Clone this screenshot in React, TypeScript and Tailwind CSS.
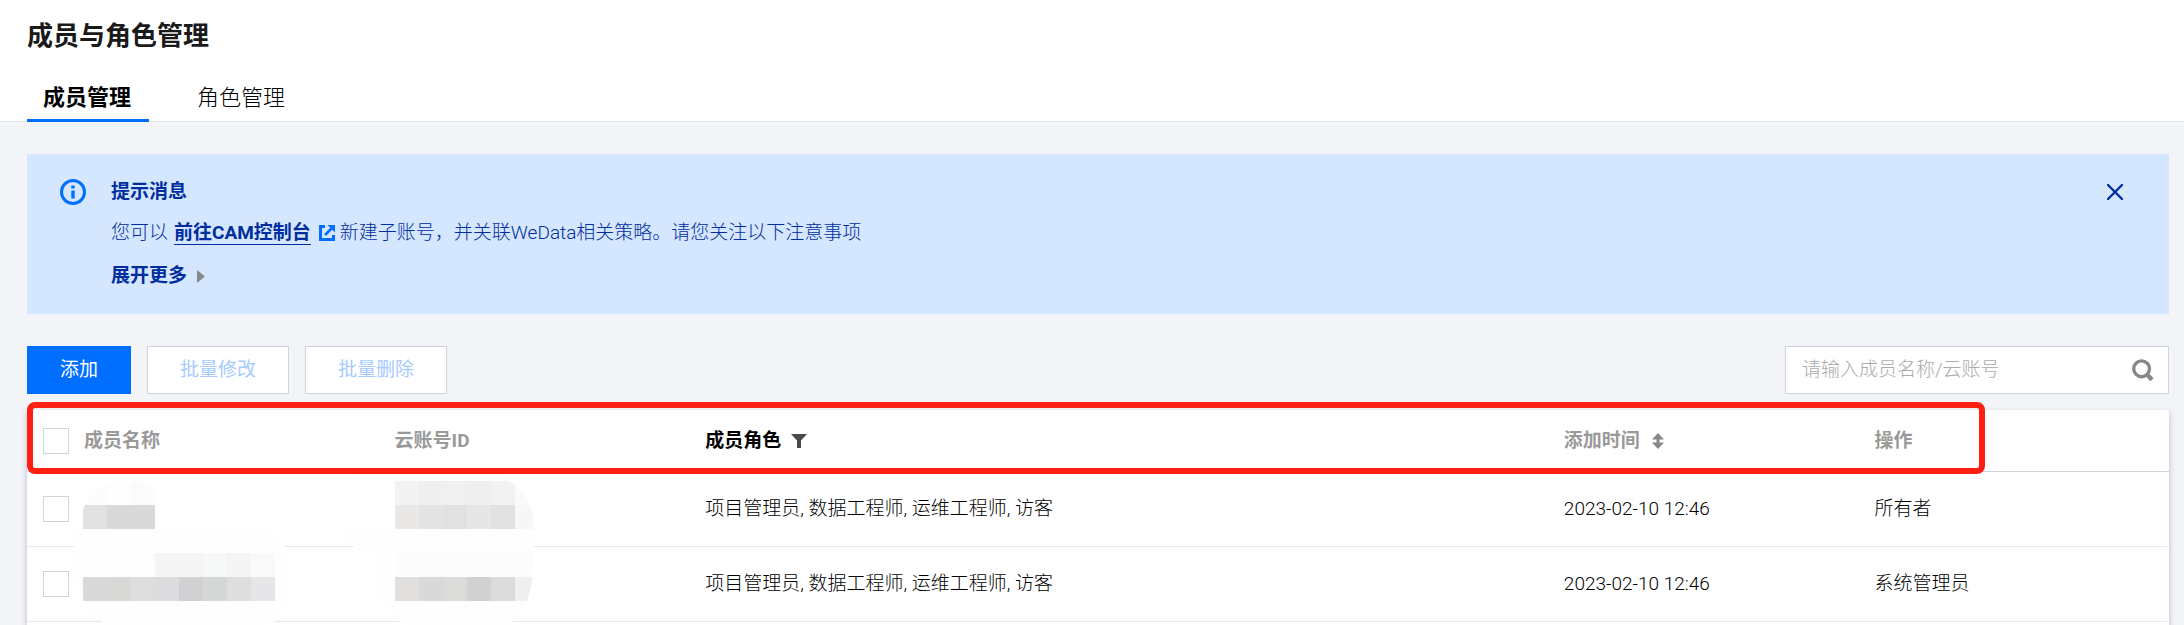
import { useState } from "react";

type Member = {
  id: string;
  roles: string;
  createdAt: string;
  operation: string;
};

const MEMBERS: Member[] = [
  {
    id: "m1",
    roles: "项目管理员, 数据工程师, 运维工程师, 访客",
    createdAt: "2023-02-10 12:46",
    operation: "所有者",
  },
  {
    id: "m2",
    roles: "项目管理员, 数据工程师, 运维工程师, 访客",
    createdAt: "2023-02-10 12:46",
    operation: "系统管理员",
  },
];

type MaskLine = { y: number; colors: (string | null)[] };

// One entry per mosaic line, 24px per block; null leaves the block out.
const NAME_MASK: MaskLine[] = [
  { y: 10, colors: ["#fcfcfc", null, "#fbfbfb"] },
  { y: 34, colors: ["#e3e1e0", "#d9d9d9", "#d9d9d9"] },
  { y: 82, colors: [null, null, "#fdfdfb", "#f5f5f5", "#f5f5f5", "#f7f9f8", "#f4f4f4", "#f9f9f9"] },
  { y: 106, colors: ["#d9d9d9", "#d8d8d6", "#dddddd", "#dcdbde", "#d3d0d3", "#d4d7d5", "#dfdedc", "#e6e6e8"] },
];

const ACCOUNT_MASK: MaskLine[] = [
  { y: 10, colors: ["#f3f3f3", "#efefef", "#f0f0f0", "#efefef", "#f2f2f2", "#fafafa"] },
  { y: 34, colors: ["#e9e8e6", "#e1e3e5", "#e1e1e1", "#e6e6e6", "#e1e1e1", "#f7f7f7"] },
  { y: 82, colors: ["#fcfcfc", "#fbfbfb", "#fcfcfc", "#fcfcfc", "#fcfcfc", "#fcfcfc"] },
  { y: 106, colors: ["#e1e0de", "#d7d9db", "#dbdbd9", "#d1d1d1", "#dbdbdb", "#efefef"] },
];

function Mosaic({ lines, x }: { lines: MaskLine[]; x: number }) {
  return (
    <>
      {lines.map((line) =>
        line.colors.map((color, i) =>
          color ? (
            <rect key={`${line.y}-${i}`} x={x + i * 24} y={line.y} width="24" height="24" fill={color} />
          ) : null,
        ),
      )}
    </>
  );
}

/** Redacted member names and account ids, laid over the first two rows. */
function MemberMask() {
  return (
    <svg
      className="pointer-events-none absolute top-[61px] left-0"
      width="520"
      height="154"
      viewBox="0 0 520 154"
      shapeRendering="crispEdges"
      aria-hidden
    >
      <clipPath id="name-mask">
        <path d="M47 85C47 45 62 10 100 10C115 10 127 17 132 26V57H235C250 62 260 72 261 90V130C255 145 250 154 235 154H80C58 140 47 120 47 85Z" />
      </clipPath>
      <clipPath id="account-mask">
        <path d="M325 8C345 4 460 2 482 10C500 20 507 40 507 60V85C506 125 498 142 480 154H380C360 142 352 132 350 106V82H335C325 76 318 66 316 58H368V10Z" />
      </clipPath>
      <g clipPath="url(#name-mask)">
        <rect x="40" y="0" width="230" height="154" fill="#fefefe" />
        <Mosaic lines={NAME_MASK} x={56} />
      </g>
      <g clipPath="url(#account-mask)">
        <rect x="310" y="0" width="200" height="154" fill="#fefefe" />
        <Mosaic lines={ACCOUNT_MASK} x={368} />
      </g>
    </svg>
  );
}

function InfoIcon() {
  return (
    <svg className="shrink-0" width="26" height="26" viewBox="0 0 26 26" aria-hidden>
      <circle cx="13" cy="13" r="11.5" fill="none" stroke="#006eff" strokeWidth="3" />
      <path fill="#006eff" d="M11.3 6.5h3.4v3h-3.4zM11.3 11.5h3.4v8h-3.4z" />
    </svg>
  );
}

function ExternalIcon() {
  return (
    <svg width="16" height="16" viewBox="0 0 16 16" aria-hidden>
      <path d="M6 1.5H1.5V14.5H14.5V10" fill="none" stroke="#006eff" strokeWidth="3" />
      <path d="M6 10L13 3" stroke="#006eff" strokeWidth="2.6" />
      <path d="M8.5 0H16V7.5Z" fill="#006eff" />
    </svg>
  );
}

function SearchIcon() {
  return (
    <svg width="22" height="23" viewBox="0 0 22 23" fill="none" stroke="#888" aria-hidden>
      <circle cx="9.6" cy="9.8" r="7.9" strokeWidth="3.4" />
      <path d="M14.8 15.2L20 20.8" strokeWidth="4.4" />
    </svg>
  );
}

function FilterIcon() {
  return (
    <svg width="16" height="14" viewBox="0 0 16 14" aria-hidden>
      <path d="M0 0H16L10 6.6V14H6V6.6Z" fill="#4a4a4a" />
    </svg>
  );
}

function SortIcon() {
  return (
    <svg width="12" height="16" viewBox="0 0 12 16" aria-hidden>
      <path d="M6 0L12 6.4H7.5V9.6H12L6 16L0 9.6H4.5V6.4H0Z" fill="#888" />
    </svg>
  );
}

function Checkbox({ label }: { label: string }) {
  return (
    <input
      type="checkbox"
      aria-label={label}
      className="block size-[26px] appearance-none border border-[#cfd5de] bg-white checked:bg-[#006eff]"
    />
  );
}

const TABS = ["成员管理", "角色管理"];

export default function App() {
  const [activeTab, setActiveTab] = useState(TABS[0]);
  const [keyword, setKeyword] = useState("");

  return (
    <div className="flex h-screen flex-col overflow-hidden bg-[#f3f4f8] font-[Roboto,'Noto_Sans_CJK_SC',sans-serif] text-[19px] leading-[28px] text-black">
      <header className="border-b border-[#e3e5ec] bg-white px-[27px] pt-[18px]">
        <h1 className="text-[26px] leading-[36px] font-bold text-[#1a1a1a]">成员与角色管理</h1>
        <nav className="-mb-px flex gap-8 pt-[19px]" role="tablist">
          {TABS.map((tab) => (
            <button
              key={tab}
              type="button"
              role="tab"
              aria-selected={tab === activeTab}
              onClick={() => setActiveTab(tab)}
              className={`border-b-[3px] pt-[9px] pr-[18px] pb-[5px] pl-4 text-[22px] leading-[32px] ${
                tab === activeTab ? "border-[#006eff] font-bold" : "border-transparent font-light"
              }`}
            >
              {tab}
            </button>
          ))}
        </nav>
      </header>

      <main className="flex min-h-0 flex-1 flex-col pt-8 pr-[15px] pl-[27px]">
        <section className="flex shrink-0 items-start bg-[#d5e7ff] px-8 pt-6 pb-6 text-[#002da0]">
          <div className="pt-px pl-px">
            <InfoIcon />
          </div>
          <div className="flex-1 pl-[25px]">
            <h2 className="font-bold">提示消息</h2>
            <p className="flex items-center pt-[13px] font-light">
              您可以
              <a href="#cam" className="mr-2 ml-[6px] border-b border-[#002da0] leading-[22px] font-bold">
                前往CAM控制台
              </a>
              <ExternalIcon />
              <span className="pl-[5px]">新建子账号，并关联WeData相关策略。请您关注以下注意事项</span>
            </p>
            <button type="button" className="mt-[15px] flex items-center gap-[10px] font-bold">
              展开更多
              <svg width="8" height="13" viewBox="0 0 8 13" aria-hidden>
                <path d="M0 0L8 6.5L0 13Z" fill="#888" />
              </svg>
            </button>
          </div>
          <button type="button" aria-label="关闭" className="mt-[6px] mr-[14px]">
            <svg width="16" height="16" viewBox="0 0 16 16" aria-hidden>
              <path d="M1 1L15 15M15 1L1 15" stroke="#002da0" strokeWidth="2.4" strokeLinecap="round" />
            </svg>
          </button>
        </section>

        <div className="flex shrink-0 items-center gap-4 pt-8">
          <button type="button" className="h-12 bg-[#006eff] px-[33px] text-white">
            添加
          </button>
          <button type="button" disabled className="h-12 border border-[#cfd5de] bg-white px-8 text-[#a6cbff]">
            批量修改
          </button>
          <button type="button" disabled className="h-12 border border-[#cfd5de] bg-white px-8 text-[#a6cbff]">
            批量删除
          </button>
          <div className="ml-auto flex h-12 w-96 items-center border border-[#cfd5de] bg-white pr-[14px] pl-4">
            <input
              type="text"
              aria-label="搜索成员"
              value={keyword}
              onChange={(e) => setKeyword(e.target.value)}
              placeholder="请输入成员名称/云账号"
              className="min-w-0 flex-1 font-light outline-none placeholder:text-[#aaa]"
            />
            <button type="button" aria-label="搜索">
              <SearchIcon />
            </button>
          </div>
        </div>

        <div className="relative mt-4 min-h-0 flex-1 bg-white shadow-[0_3px_6px_rgba(54,58,80,0.3)]">
          <table className="w-full table-fixed border-collapse text-left">
            <colgroup>
              <col className="w-[41px]" />
              <col className="w-[14.5%]" />
              <col className="w-[14.5%]" />
              <col />
              <col className="w-[14.5%]" />
              <col className="w-[14.5%]" />
            </colgroup>
            <thead>
              <tr className="h-[61px] border-b border-[#cfd5de] text-[#999]">
                <th className="pt-[2px] pl-4">
                  <Checkbox label="全选" />
                </th>
                <th className="px-4 pt-[2px] font-bold">成员名称</th>
                <th className="px-4 pt-[2px] font-bold">云账号ID</th>
                <th className="px-4 pt-[2px] font-bold text-black">
                  <span className="flex items-center gap-[10px]">
                    成员角色
                    <button type="button" aria-label="筛选">
                      <FilterIcon />
                    </button>
                  </span>
                </th>
                <th className="px-4 pt-[2px] font-bold">
                  <span className="flex items-center gap-3">
                    添加时间
                    <button type="button" aria-label="排序">
                      <SortIcon />
                    </button>
                  </span>
                </th>
                <th className="px-4 pt-[2px] font-bold">操作</th>
              </tr>
            </thead>
            <tbody>
              {MEMBERS.map((member) => (
                <tr key={member.id} className="h-[75px] border-b border-[#e5e8ed] font-light">
                  <td className="pl-4">
                    <Checkbox label="选择成员" />
                  </td>
                  <td />
                  <td />
                  <td className="px-4">{member.roles}</td>
                  <td className="px-4">{member.createdAt}</td>
                  <td className="px-4">{member.operation}</td>
                </tr>
              ))}
            </tbody>
          </table>
          <MemberMask />
          {/* callout around the header row */}
          <div className="pointer-events-none absolute -top-2 left-0 h-[72px] w-[91.4%] rounded-lg border-[6px] border-[#ff1e12]" />
        </div>
      </main>
    </div>
  );
}
